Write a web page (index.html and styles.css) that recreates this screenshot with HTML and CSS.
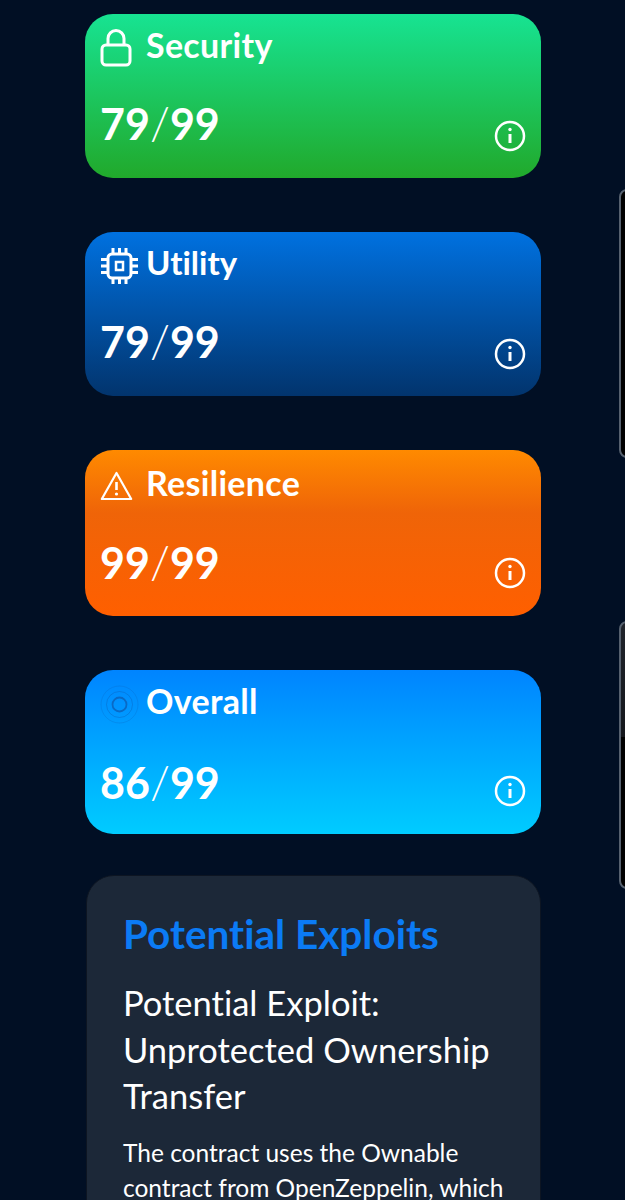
FILE: index.html
```html
<!DOCTYPE html>
<html lang="en">
<head>
  <meta charset="UTF-8">
  <title>Audit Scores</title>
  <link rel="stylesheet" href="styles.css">
</head>
<body>
<div class="page">
  <div class="peek peek-one"></div>
  <div class="peek peek-two"></div>

  <div class="score-card security">
    <div class="card-title">
      <span class="icon-slot">
        <svg width="32" height="38" viewBox="0 0 32 38" fill="none" stroke="#fff" stroke-width="3">
          <rect x="2" y="16" width="28" height="20" rx="4"/>
          <path d="M8 16V9.500a8 8 0 0 1 16 0V16"/>
        </svg>
      </span>
      <span>Security</span>
    </div>
    <div class="card-bottom">
      <span class="score">79<span class="slash">/</span>99</span>
      <svg class="info" width="32" height="32" viewBox="0 0 32 32" fill="none" stroke="#fff"><circle cx="16" cy="16" r="14" stroke-width="2.500"/><path d="M16 14v9" stroke-width="3"/><circle cx="16" cy="9.500" r="1.700" fill="#fff" stroke="none"/></svg>
    </div>
  </div>

  <div class="score-card utility">
    <div class="card-title">
      <span class="icon-slot">
        <svg width="39" height="38" viewBox="0 0 39 38" fill="none" stroke="#fff" stroke-width="3">
          <rect x="8" y="7" width="23" height="24" rx="4"/>
          <rect x="16" y="15" width="7" height="8" stroke-width="2.500"/>
          <path d="M13 1v5M19.500 1v5M26 1v5M13 32v5M19.500 32v5M26 32v5M1 12.500h6M1 19h6M1 25.500h6M32 12.500h6M32 19h6M32 25.500h6"/>
        </svg>
      </span>
      <span>Utility</span>
    </div>
    <div class="card-bottom">
      <span class="score">79<span class="slash">/</span>99</span>
      <svg class="info" width="32" height="32" viewBox="0 0 32 32" fill="none" stroke="#fff"><circle cx="16" cy="16" r="14" stroke-width="2.500"/><path d="M16 14v9" stroke-width="3"/><circle cx="16" cy="9.500" r="1.700" fill="#fff" stroke="none"/></svg>
    </div>
  </div>

  <div class="score-card resilience">
    <div class="card-title">
      <span class="icon-slot">
        <svg width="33" height="30" viewBox="0 0 33 30" fill="none" stroke="#fff" stroke-width="2.200" stroke-linejoin="round">
          <path d="M16.500 2 1.800 28h29.400z"/>
          <path d="M16.500 11v8" stroke-width="2.600"/>
          <circle cx="16.500" cy="23" r="1.600" fill="#fff" stroke="none"/>
        </svg>
      </span>
      <span>Resilience</span>
    </div>
    <div class="card-bottom">
      <span class="score">99<span class="slash">/</span>99</span>
      <svg class="info" width="32" height="32" viewBox="0 0 32 32" fill="none" stroke="#fff"><circle cx="16" cy="16" r="14" stroke-width="2.500"/><path d="M16 14v9" stroke-width="3"/><circle cx="16" cy="9.500" r="1.700" fill="#fff" stroke="none"/></svg>
    </div>
  </div>

  <div class="score-card overall">
    <div class="card-title">
      <span class="icon-slot">
        <svg width="39" height="39" viewBox="0 0 39 39" fill="none" stroke="#0b5fb8">
          <circle cx="19.500" cy="19.500" r="18.500" stroke-width="0.600" opacity="0.400"/>
          <circle cx="19.500" cy="19.500" r="13" stroke-width="0.800" opacity="0.500"/>
          <circle cx="19.500" cy="19.500" r="7" stroke-width="1.800" opacity="0.800"/>
        </svg>
      </span>
      <span>Overall</span>
    </div>
    <div class="card-bottom">
      <span class="score">86<span class="slash">/</span>99</span>
      <svg class="info" width="32" height="32" viewBox="0 0 32 32" fill="none" stroke="#fff"><circle cx="16" cy="16" r="14" stroke-width="2.500"/><path d="M16 14v9" stroke-width="3"/><circle cx="16" cy="9.500" r="1.700" fill="#fff" stroke="none"/></svg>
    </div>
  </div>

  <div class="exploits">
    <h2>Potential Exploits</h2>
    <h3>Potential Exploit: Unprotected Ownership Transfer</h3>
    <p>The contract uses the Ownable contract from OpenZeppelin, which</p>
  </div>
</div>
</body>
</html>
```

FILE: styles.css
```css
* {
  box-sizing: border-box;
}
body {
  margin: 0;
  background: #010f24;
  font-family: 'Lato', 'Liberation Sans', sans-serif;
  font-variant-ligatures: none;
  color: white;
}
.page {
  position: relative;
  height: 1200px;
  overflow: hidden;
  padding: 14px 0 0 85px;
}
.peek {
  position: absolute;
  left: 619px;
  width: 40px;
  background: #000;
  border: 2px solid #56616f;
  border-radius: 8px;
}
.peek-one {
  top: 189px;
  height: 269px;
}
.peek-two {
  top: 621px;
  height: 268px;
  background: linear-gradient(#20242b, #14171c 43%, #000 43%);
}
.score-card {
  width: 456px;
  height: 164px;
  margin-bottom: 54px;
  padding: 11px 15px 0 15px;
  border-radius: 28px;
}
.security {
  background: linear-gradient(#17e392, #21a92b);
}
.utility {
  background: linear-gradient(#0071e0, #02346d);
}
.utility .card-title {
  font-size: 33px;
  letter-spacing: 0;
}
.resilience {
  height: 166px;
  padding-top: 13px;
  background: linear-gradient(#ff8a00, #ef6408 38%, #ff5f00);
}
.resilience .card-bottom {
  margin-top: 36px;
}
.resilience .info {
  margin-bottom: 0;
}
.overall {
  margin-bottom: 41px;
  background: linear-gradient(#0084ff, #00ccff);
}
.overall .card-bottom {
  margin-top: 38px;
}
.overall .info {
  margin-bottom: 2px;
}
.card-title {
  display: flex;
  align-items: center;
  height: 38px;
  font-size: 34px;
  font-weight: 700;
  letter-spacing: 0.3px;
}
.icon-slot {
  display: flex;
  align-items: center;
  width: 46px;
  height: 38px;
  margin-top: 8px;
}
.card-bottom {
  display: flex;
  justify-content: space-between;
  align-items: flex-end;
  margin-top: 35px;
}
.score {
  font-size: 43px;
  font-weight: 700;
  line-height: 52px;
}
.slash {
  font-size: 46px;
  line-height: 0;
  font-weight: 300;
}
.info {
  margin-bottom: -2px;
}
.exploits {
  width: 455px;
  height: 500px;
  margin-left: 1px;
  padding: 34px 36px;
  background: #1c2838;
  border: 1px solid #0d1522;
  border-radius: 28px;
}
.exploits h2 {
  margin: 0;
  font-size: 40.500px;
  line-height: 48px;
  font-weight: 700;
  color: #0b7bf5;
}
.exploits h3 {
  margin: 22px 0 0;
  font-size: 34.500px;
  line-height: 46.500px;
  font-weight: 400;
}
.exploits p {
  margin: 15px 0 0;
  font-size: 24.500px;
  line-height: 35.500px;
}
```
